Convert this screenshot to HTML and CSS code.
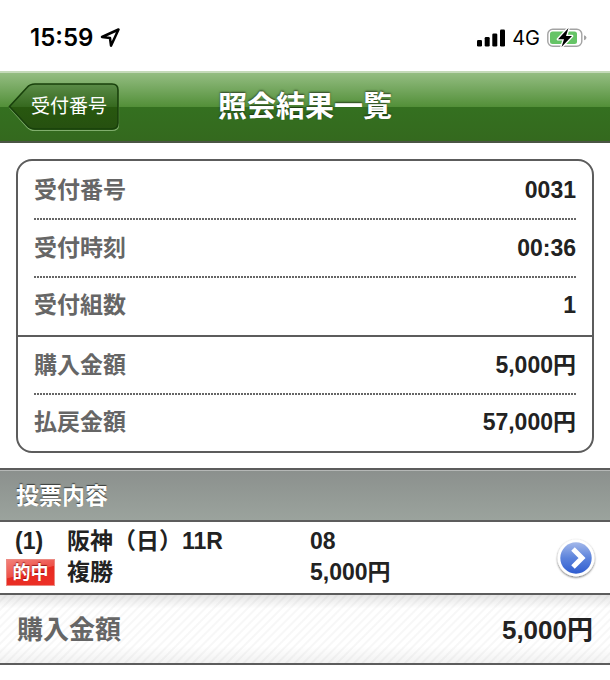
FILE: index.html
```html
<!DOCTYPE html>
<html lang="ja">
<head>
<meta charset="utf-8">
<meta name="viewport" content="width=device-width, initial-scale=1">
<title>照会結果一覧</title>
<link rel="stylesheet" href="styles.css">
</head>
<body>
<div class="status">
  <div class="status-left">
    <span class="clock">15:59</span>
    <svg class="location" width="20" height="20" viewBox="0 0 20 20" aria-hidden="true"><path d="M2 9 L18.500 1.500 L11 17.700 L10 10 Z" fill="none" stroke="#000" stroke-width="2.500" stroke-linejoin="round"/></svg>
  </div>
  <div class="status-right">
    <svg width="28" height="18" viewBox="0 0 28 18" aria-hidden="true"><rect x="0" y="11" width="5" height="6.500" rx="1.300"/><rect x="7.700" y="8" width="5" height="9.500" rx="1.300"/><rect x="15.300" y="4.500" width="5" height="13" rx="1.300"/><rect x="23" y="0.500" width="5" height="17" rx="1.300"/></svg>
    <span class="network">4G</span>
    <svg class="battery" width="40" height="22" viewBox="0 0 40 22" aria-hidden="true"><rect x="0.800" y="2.200" width="34" height="17" rx="5" fill="#fff" stroke="#a3a3a3" stroke-width="1.400"/><rect x="3" y="4.400" width="27" height="12.600" rx="2.500" fill="#65c466"/><path d="M37 8.200 Q39.500 9 39.500 10.700 Q39.500 12.400 37 13.200 Z" fill="#a3a3a3"/><path d="M21.500 1 L11 12.200 H17 L14.500 20 L25 9 H19 Z" fill="#000" stroke="#fff" stroke-width="2.600" paint-order="stroke" stroke-linejoin="round"/></svg>
  </div>
</div>

<header class="navbar">
  <button class="back" type="button">
    <svg class="back-shape" viewBox="0 0 112 50" preserveAspectRatio="none" aria-hidden="true">
      <defs><linearGradient id="back-fill" x1="0" y1="0" x2="0" y2="1"><stop offset="0" stop-color="#5b8c48"/><stop offset="0.500" stop-color="#36691f"/><stop offset="0.510" stop-color="#28580f"/><stop offset="1" stop-color="#265010"/></linearGradient></defs>
      <path d="M27 3.500 H104 Q110.500 3.500 110.500 9.500 V43 Q110.500 48.500 104 48.500 H27 Q22 48.500 19 45 L2 26 L19 7 Q22 3.500 27 3.500 Z" fill="none" stroke="#80ae6c" stroke-width="1.200"/>
      <path d="M27 2 H104 Q110 2 110 8 V41 Q110 47 104 47 H27 Q22 47 19 43.500 L1.500 24.500 L19 5.500 Q22 2 27 2 Z" fill="url(#back-fill)" stroke="#18400b" stroke-width="1.600"/>
    </svg>
    <span class="back-label">受付番号</span>
  </button>
  <h1 class="title">照会結果一覧</h1>
</header>

<main>
  <dl class="summary">
    <div class="row dotted"><dt>受付番号</dt><dd>0031</dd></div>
    <div class="row dotted"><dt>受付時刻</dt><dd>00:36</dd></div>
    <div class="row solid"><dt>受付組数</dt><dd>1</dd></div>
    <div class="row dotted"><dt>購入金額</dt><dd>5,000円</dd></div>
    <div class="row"><dt>払戻金額</dt><dd>57,000円</dd></div>
  </dl>

  <h2 class="section">投票内容</h2>

  <a class="bet" href="#detail">
    <span class="bet-number">(1)</span>
    <span>阪神（日）11R</span>
    <span>08</span>
    <span class="hit">的中</span>
    <span>複勝</span>
    <span>5,000円</span>
    <svg class="arrow" width="42" height="42" viewBox="0 0 42 42" aria-hidden="true">
      <defs>
        <linearGradient id="disc" x1="0" y1="0" x2="0" y2="1"><stop offset="0" stop-color="#a3b8ea"/><stop offset="0.500" stop-color="#5c83dc"/><stop offset="1" stop-color="#2f5dd0"/></linearGradient>
        <filter id="disc-shadow" x="-20%" y="-20%" width="140%" height="150%"><feDropShadow dx="0" dy="1" stdDeviation="1.200" flood-color="#000" flood-opacity="0.600"/></filter>
      </defs>
      <circle cx="21" cy="20" r="18.500" fill="#fff" filter="url(#disc-shadow)"/>
      <circle cx="21" cy="20" r="15.700" fill="url(#disc)"/>
      <path d="M18 11 L27 20 L18 29" fill="none" stroke="#fff" stroke-width="5"/>
    </svg>
  </a>

  <div class="total"><span class="total-label">購入金額</span><span>5,000円</span></div>
</main>
</body>
</html>
```

FILE: styles.css
```css
* {
  box-sizing: border-box;
}

body {
  margin: 0;
  background: #fff;
  color: #222;
  font-family: "Liberation Sans", "Noto Sans CJK JP", sans-serif;
  font-size: 23px;
  font-weight: 700;
}

.status {
  display: flex;
  justify-content: space-between;
  align-items: center;
  height: 71px;
  padding: 4px 23px 0 30px;
  color: #000;
  font-family: Inter, sans-serif;
}

.status-left,
.status-right {
  display: flex;
  align-items: center;
  gap: 7px;
}

.clock {
  font-size: 24px;
  font-weight: 600;
}

.network {
  font-size: 20px;
  font-weight: 400;
}

.navbar {
  display: grid;
  grid-template-columns: 1fr auto 1fr;
  align-items: center;
  height: 72px;
  padding: 0 8px;
  border-top: 2px solid #c4dab9;
  border-bottom: 2px solid #4b5545;
  background: linear-gradient(#94bd82, #528f38 50%, #347020 50%, #34691e);
}

.back {
  position: relative;
  justify-self: start;
  width: 112px;
  height: 50px;
  padding: 0 0 6px 10px;
  border: 0;
  background: none;
  color: #fff;
  font-family: "Noto Sans CJK JP", sans-serif;
  font-size: 19px;
  font-weight: 400;
}

.back-shape {
  position: absolute;
  inset: 0;
  width: 100%;
  height: 100%;
}

.back-label {
  position: relative;
  white-space: nowrap;
}

.title {
  margin: 0;
  color: #fff;
  font-size: 29px;
  line-height: 40px;
  text-shadow: 0 -1px 2px rgba(0, 0, 0, 0.6);
}

.summary {
  margin: 16px;
  margin-bottom: 15px;
  padding-top: 1px;
  border: 2px solid #5c5c5c;
  border-radius: 16px;
}

.row {
  display: flex;
  justify-content: space-between;
  align-items: center;
  height: 58px;
  padding: 0 16px;
  line-height: 54px;
}

.row:last-child {
  height: 57px;
}

.row dt,
.row dd {
  margin: 0;
  padding-bottom: 3px;
}

.row dt {
  color: #666;
}

.dotted {
  background: repeating-linear-gradient(90deg, #666 0 2px, #fff 2px 3px) content-box 0 100% / 100% 2px no-repeat;
}

.solid {
  height: 59px;
  border-bottom: 2px solid #5c5c5c;
}

.solid + .row ~ .row {
  height: 56px;
}

.section {
  display: flex;
  align-items: center;
  height: 54px;
  margin: 0;
  padding: 0 16px 2px;
  border-top: 2px solid #5c5c5c;
  border-bottom: 2px solid #5c5c5c;
  background: linear-gradient(#8b908d, #9ba39d);
  box-shadow: inset 0 1px #b5b8b6;
  color: #fff;
  font-size: 23px;
  text-shadow: 0 -1px 1px rgba(0, 0, 0, 0.6);
}

.bet {
  display: grid;
  grid-template-columns: 49px 231px 1fr 42px;
  grid-template-rows: 31px 31px;
  column-gap: 12px;
  align-items: center;
  height: 71px;
  padding: 4px 13px 5px 6px;
  color: #222;
  line-height: 31px;
  text-decoration: none;
}

.bet-number {
  padding-left: 9px;
}

.hit {
  height: 27px;
  border: 1px solid #ec8a83;
  background: linear-gradient(165deg, #f2817a, #ee5148 48%, #e62b22 50%, #ee3026);
  color: #fff;
  font-size: 18px;
  line-height: 26px;
  text-align: center;
  text-shadow: 0 -1px 1px rgba(120, 0, 0, 0.7);
}

.arrow {
  grid-column: 4;
  grid-row: 1 / 3;
  margin-top: 4px;
}

.total {
  display: flex;
  justify-content: space-between;
  align-items: center;
  height: 72px;
  padding: 0 17px 4px;
  border-top: 2px solid #5c5c5c;
  border-bottom: 2px solid #5c5c5c;
  background:
    linear-gradient(rgba(0, 0, 0, 0.1), rgba(0, 0, 0, 0) 20%, rgba(0, 0, 0, 0) 75%, rgba(0, 0, 0, 0.05)),
    repeating-linear-gradient(135deg, #fff 0 3px, #f7f7f7 4px 5px, #fff 6px);
  font-size: 26px;
}

.total-label {
  color: #666;
}
```
